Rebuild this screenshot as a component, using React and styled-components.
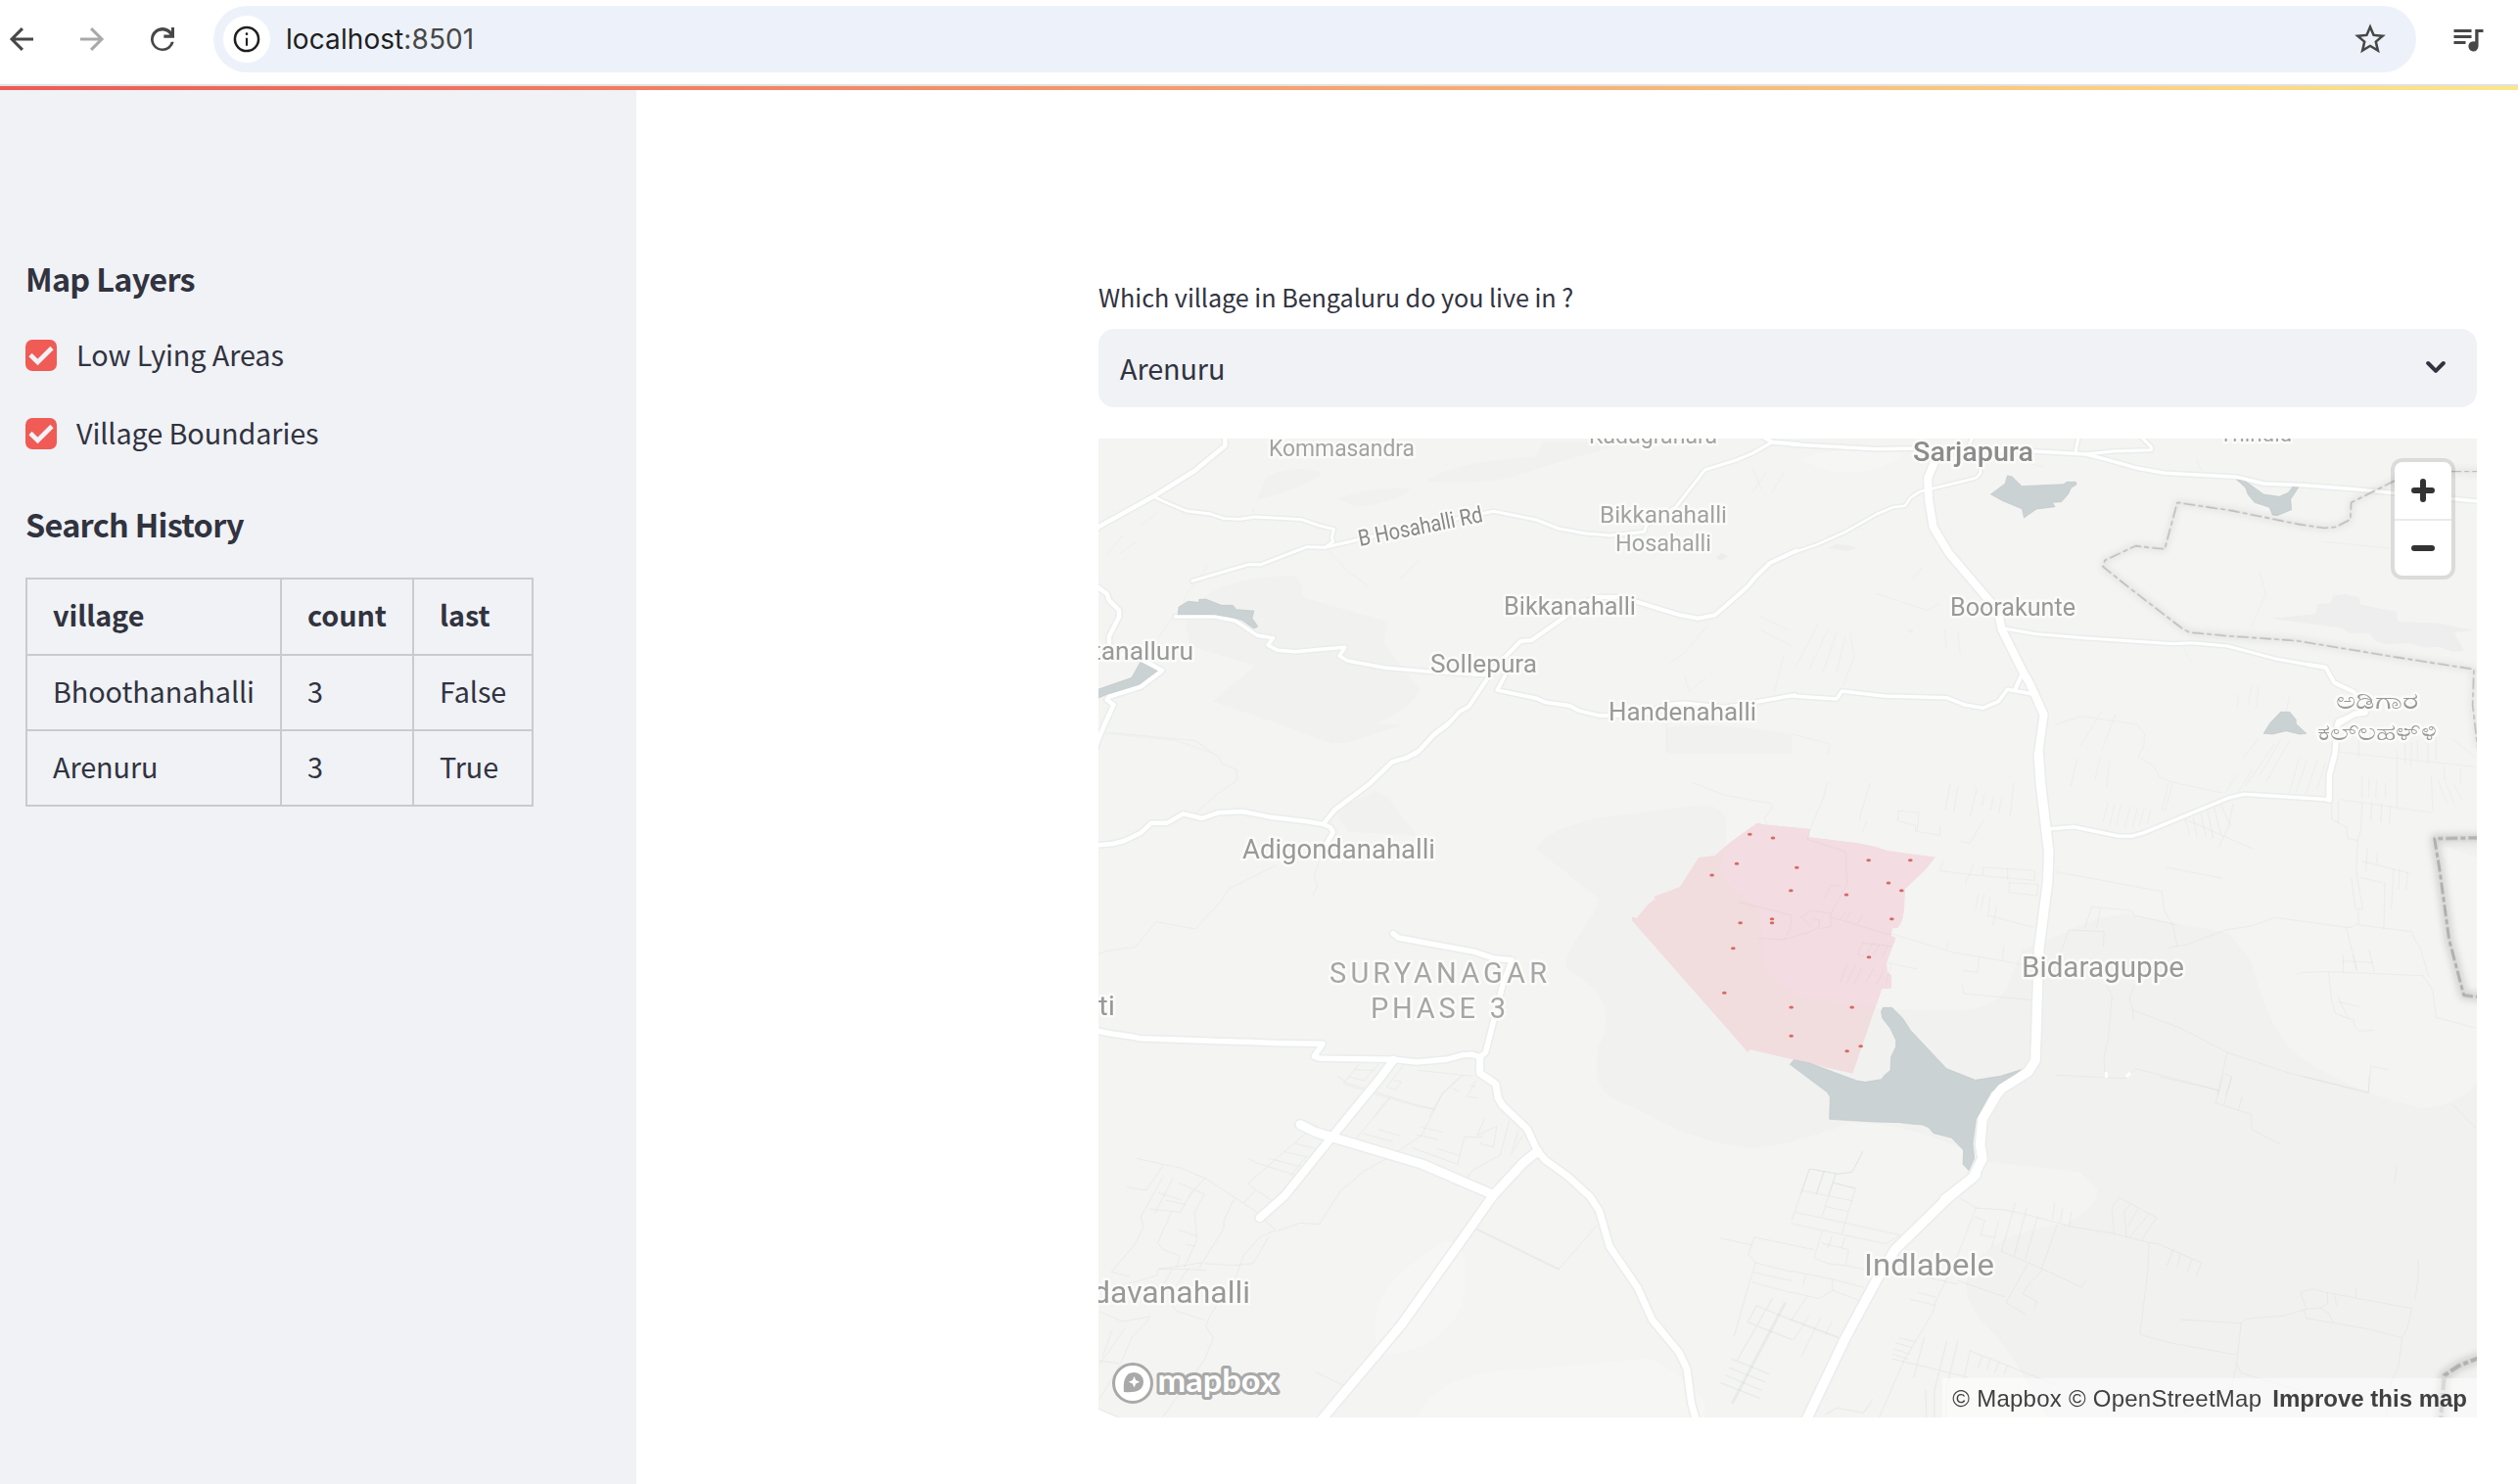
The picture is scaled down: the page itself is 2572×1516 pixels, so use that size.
import React from "react";
import styled, { createGlobalStyle } from "styled-components";

const GlobalStyle = createGlobalStyle`
  *, *::before, *::after { box-sizing: border-box; }
  body {
    margin: 0;
    background: #fff;
    color: #31333f;
    font-family: "Noto Sans CJK SC", "Noto Sans", sans-serif;
  }
`;

const Page = styled.div`
  display: flex;
  flex-direction: column;
  height: 1516px;
  overflow: hidden;
`;

/* ---------- browser toolbar ---------- */

const Toolbar = styled.header`
  display: flex;
  align-items: center;
  height: 88px;
  padding: 0 34px 6px 6px;
  border-bottom: 2px solid #dfe1e0;
  background: #fff;
`;

const NavButtons = styled.nav`
  display: flex;
  gap: 40px;
  margin-right: 36px;
`;

const Icon = styled.svg`
  display: block;
  flex: none;
  width: ${(p) => p.$size}px;
  height: ${(p) => p.$size}px;
  fill: ${(p) => p.$color || "#474747"};
`;

const AddressBar = styled.div`
  display: flex;
  align-items: center;
  flex: 1;
  height: 68px;
  padding: 0 28px 0 10px;
  border-radius: 34px;
  background: #edf2fa;
`;

const SiteInfo = styled.span`
  display: grid;
  place-items: center;
  width: 48px;
  height: 48px;
  margin-right: 16px;
  border-radius: 50%;
  background: #fff;
`;

const Url = styled.span`
  flex: 1;
  color: #1f1f1f;
  font: 400 28px/40px Inter, sans-serif;
  letter-spacing: 0.08px;
`;

const Port = styled.span`
  color: #474747;
`;

const MediaButton = styled.span`
  margin-left: 34px;
`;

/* ---------- app shell ---------- */

const Decoration = styled.div`
  flex: none;
  height: 4px;
  background: linear-gradient(90deg, #ee5a55, #fde68a);
`;

const Shell = styled.div`
  display: flex;
  flex: 1;
`;

const Sidebar = styled.aside`
  width: 650px;
  padding: 170px 26px 0;
  background: #f0f2f6;
`;

const SectionTitle = styled.h3`
  margin: ${(p) => p.$top || 0}px 0 0;
  font-size: 32.4px;
  font-weight: 700;
  line-height: 44px;
  letter-spacing: -0.7px;
`;

const CheckRow = styled.label`
  display: flex;
  gap: 20px;
  height: 32px;
  margin-top: ${(p) => p.$top}px;
  font-size: 28.8px;
  line-height: 30px;
  letter-spacing: -0.1px;
`;

const CheckBox = styled.span`
  display: grid;
  place-items: center;
  width: 32px;
  height: 32px;
  border-radius: 7px;
  background: #f05b55;
`;

const HistoryTable = styled.table`
  width: 518px;
  margin-top: 33px;
  border-collapse: collapse;
  table-layout: fixed;
  font-size: 28.8px;
  line-height: 40px;
`;

const Cell = styled.td`
  height: 77px;
  padding: 0 0 3px 26px;
  border: 2px solid #c9cbcf;
  text-align: left;
  font-weight: 400;
  letter-spacing: -0.08px;
`;

const HeadCell = styled(Cell)`
  height: 78px;
  padding-bottom: 5px;
  font-weight: 700;
`;

const Main = styled.main`
  display: flex;
  flex-direction: column;
  width: 1408px;
  margin-left: 472px;
  padding-top: 195px;
`;

const FieldLabel = styled.div`
  font-size: 25.2px;
  line-height: 32px;
  letter-spacing: -0.05px;
`;

const Select = styled.div`
  display: flex;
  align-items: center;
  justify-content: space-between;
  height: 80px;
  margin: 17px 0 32px;
  padding: 0 32px 2px 22px;
  border-radius: 16px;
  background: #f0f2f6;
  font-size: 28.8px;
  letter-spacing: -0.1px;
`;

/* ---------- map ---------- */

const MapFrame = styled.section`
  position: relative;
  height: 1000px;
  overflow: hidden;
  background: #f4f4f2;
`;

const MapCanvas = styled.svg`
  display: block;
  width: 1408px;
  height: 1000px;
`;

const Place = styled.text`
  font-family: Roboto, sans-serif;
  font-size: ${(p) => p.$size}px;
  font-weight: ${(p) => p.$weight || 400};
  fill: ${(p) => p.$color || "#999"};
  stroke: #fbfbfa;
  stroke-width: 5px;
  stroke-linejoin: round;
  paint-order: stroke;
`;

const Wordmark = styled.text`
  font: 700 33px Lato, sans-serif;
  fill: #fff;
  stroke: #a9a9a9;
  stroke-width: 6px;
  stroke-linejoin: round;
  paint-order: stroke;
`;

const ZoomGroup = styled.div`
  position: absolute;
  top: 24px;
  right: 26px;
  display: flex;
  flex-direction: column;
  width: 58px;
  border-radius: 8px;
  background: #fff;
  box-shadow: 0 0 0 4px rgba(0, 0, 0, 0.1);
`;

const ZoomButton = styled.button`
  display: grid;
  place-items: center;
  height: 58px;
  padding: 0;
  border: 0;
  border-top: ${(p) => (p.$divided ? "2px solid #ebebeb" : "0")};
  background: none;
`;

const Attribution = styled.div`
  position: absolute;
  right: 0;
  bottom: 0;
  display: flex;
  gap: 11px;
  height: 40px;
  padding: 1px 10px 0;
  background: rgba(255, 255, 255, 0.5);
  color: #404040;
  font: 400 24px/40px "Liberation Sans", Arial, sans-serif;
`;

const Credits = styled.span`
  letter-spacing: 0.24px;
`;

const k = 720 / 1568;
const t = 1 / 3;

const SHEETS = {
  nw: `translate(1110 270) scale(${k} ${t})`,
  ne: `translate(1830 270) scale(${k} ${t})`,
  west: `translate(1110 740) scale(${600 / 1568} ${t})`,
  mid: `translate(1630 800) scale(${t})`,
  east: `translate(2100 700) scale(${t})`,
  sw: `translate(1110 1100) scale(${k} ${t})`,
  se: `translate(1830 1100) scale(${k} ${t})`,
};

const ROADS = [
  ["nw", 4.5, "308,520 308,556 240,633 148,712 26,805 10,818"],
  ["nw", 2.8, "148,712 185,735 222,756 275,765 305,779 340,781 375,774 478,782 515,800 550,812 545,838 548,850 530,868"],
  ["nw", 3, "235,970 360,920 388,920 490,866 530,868 600,845 750,800 905,757 1000,783 1050,810 1110,825 1165,831 1240,820 1245,800 1310,745 1375,630 1445,600 1480,580 1525,545"],
  ["nw", 4, "1500,525 1525,545 1585,552"],
  ["nw", 4.5, "15,980 45,1010 50,1030 72,1060 72,1080 50,1140 50,1170 65,1190 120,1210 168,1245 120,1295 50,1325 45,1335 60,1350 40,1410 26,1455 10,1530"],
  ["nw", 3.5, "197,1080 285,1080 330,1092 380,1138 415,1145 403,1167 425,1183 465,1187 520,1180 575,1174 562,1200 580,1215 665,1237 760,1248 870,1258 893,1256"],
  ["nw", 4, "1580,877 1520,915 1490,955 1470,988 1398,1075 1360,1085 1320,1075 1225,1035 1180,1020 1130,1020 1080,1065 990,1152 965,1155 915,1225 895,1262 850,1355 830,1370 800,1415 770,1445 740,1490 730,1502"],
  ["nw", 3.8, "935,1250 913,1305 1000,1330 1020,1342 1075,1353 1095,1368 1140,1383 1230,1383 1290,1350 1330,1345 1420,1358 1495,1340 1575,1320"],
  ["ne", 3.5, "0,552 190,566 280,564 540,573 655,582 700,598 770,625 830,640 990,652 1050,672 1140,677 1260,690 1540,728"],
  ["ne", 3, "632,577 635,550 640,520"],
  ["ne", 3, "655,582 715,573 800,569 800,560 775,525"],
  ["ne", 3, "395,555 405,520"],
  ["ne", 2.5, "420,625 420,640 410,655 380,665 285,697 265,715 252,740 225,745 190,765 120,820 55,860 0,885"],
  ["ne", 8, "320,600 303,655 305,720 315,805 350,885 433,1020 458,1060 468,1120 515,1250 530,1285 561,1380 549,1500"],
  ["ne", 3, "468,1115 545,1133 650,1145 850,1163 890,1160 970,1170 1080,1210 1150,1227"],
  ["ne", 4, "1150,1227 1188,1235 1207,1282 1250,1310 1275,1345 1278,1375 1250,1380 1215,1400 1212,1440"],
  ["ne", 3.5, "-5,1322 100,1332 112,1308 205,1323 345,1328 385,1350 425,1360 460,1340 480,1303 540,1318"],
  ["ne", 4, "513,1255 497,1303"],
  ["west", 4.5, "10,372 70,366 100,357 145,332 173,302 215,302 258,274 308,288 350,271 415,267 490,284 590,298 630,306 650,315 658,330 635,375"],
  ["west", 4.5, "967,-4 930,28 888,80 855,102 815,115 755,182 662,262 632,305"],
  ["west", 5.5, "818,641 832,654 1035,697 1085,717 1135,722 1110,800 1065,1005 1050,1020"],
  ["west", 5.5, "10,935 65,948 120,957 140,962 520,977 630,979 607,1018 625,1024 820,1027 880,1035 960,1027 1005,1013 1030,1012 1050,1020"],
  ["sw", 7, "875,-60 874,-12 910,22 915,65 925,88 980,160 1003,228 1020,255 1070,305 1120,368 1140,410 1163,520 1225,645 1258,745 1318,845 1335,895 1345,1000 1357,1060"],
  ["sw", 8, "683,-52 655,0 545,185 440,365 385,432"],
  ["sw", 9, "475,146 510,170 545,185 745,267 905,362"],
  ["sw", 9, "1003,228 970,265 905,362 860,450 700,760 520,1055"],
  ["sw", 8, "-10,1014 17,1028 90,1070"],
  ["mid", 9.5, "1357,-90 1363,0 1388,210 1385,300 1358,510 1347,850 1325,885 1245,935 1228,955 1185,1030 1178,1110 1185,1150 1155,1210 1070,1275"],
  ["se", 9.5, "410,300 345,375 230,530 190,620 120,800 30,1060"],
  ["east", 3.5, "-20,440 55,434 190,462 230,463 270,452 530,345 575,334 838,350"],
  ["east", 5.5, "837,351 838,275 855,210 862,120 915,88 945,85"],
];

const LANES = [
  ["sw", 1, "110,250 210,280 265,312 330,370 375,412 420,470 385,492 350,545 330,620 275,730 265,765 282,800 262,868 168,1044"],
  ["sw", 1, "170,272 132,348 90,338 M168,310 120,430 127,458 108,512 55,598 95,612 M192,310 152,418 M160,355 210,378 M175,378 220,392 M140,405 208,415 235,350 M205,325 262,360 240,415 245,500 217,585 M262,312 225,370 M188,415 158,510 170,530 207,548 200,585 M328,375 305,440 305,465 250,585 M205,470 245,488 M220,515 240,518"],
  ["sw", 1, "488,172 358,328 410,378 M360,250 380,265 460,300 M440,230 490,245 M465,205 508,220 M405,250 475,275 M375,350 350,385 M488,245 455,300"],
  ["sw", 1, "425,472 475,448 517,452 565,350 618,288 668,250 M672,65 600,190 M560,0 580,20 640,45 730,85 770,98 M830,0 790,55 745,180 690,230 M615,175 680,198 M650,162 695,180 M745,155 792,170 M735,178 782,192 M725,218 825,268 840,185 880,185 M885,130 868,180 912,152 905,215 875,205 M780,220 830,242 M940,135 920,240 860,285 845,310 M960,165 945,235 M970,180 950,225"],
  ["sw", 1.8, "865,465 1050,590"],
  ["sw", 1, "1050,590 1135,455 M510,905 570,945 M262,572 330,578 370,572 405,490 M255,570 160,590 155,610 50,650 M85,770 30,880 M55,780 35,860 M140,740 100,800 75,880 30,985 M190,700 200,718 260,745 M30,720 80,750 140,735 M160,588 265,592 M190,590 165,650 M225,590 200,640 M26,870 70,878"],
  ["sw", 1, "1410,495 1480,515 M1568,515 1485,492 1472,545 1488,570 1568,598 M1488,570 1470,650 1440,795 M1485,600 1568,625 M1482,630 1568,662"],
  ["sw", 3, "1553,695 1437,998"],
  ["sw", 1.2, "1490,702 1470,752 1568,805 M1490,702 1568,745 M1525,680 1447,868 M1435,865 1517,910 M1430,892 1508,935 M1422,915 1500,960 M1410,938 1497,985"],
  ["se", 1, "158,230 135,292 105,298 40,282 0,440 M40,282 M72,290 55,358 M98,300 67,430 M92,325 142,342 112,480 M22,348 135,380 M75,398 125,412 M8,415 242,485 210,512 0,450 M68,475 50,555 80,572 125,580 160,590 M68,510 127,530 120,578 M90,490 80,525 M118,495 112,522"],
  ["se", 1, "0,515 50,530 M0,595 90,620 92,655 60,680 0,660 M90,620 160,645 M32,605 25,640 M92,655 150,685 M35,672 0,745 M65,738 22,855 M90,750 75,790 M38,735 5,805"],
  ["se", 1.8, "0,745 105,800"],
  ["se", 1, "375,372 410,402 475,408 530,425 625,460 715,480 795,508 815,512 912,570 900,610 M848,532 835,578 M865,545 858,585 M890,560 880,598 M410,402 370,545 345,620 320,690 315,720 250,870 195,1044 M370,625 475,675 M250,600 370,635 M408,430 430,440 420,485 450,492 M497,388 467,535 M523,402 495,550 M547,430 520,560 M590,455 570,535 555,590 M585,388 580,435 M603,402 598,445 M622,415 618,458 M467,535 560,590 645,645 657,622 M560,590 525,640 515,665 547,690 540,708 M525,575 477,692 520,728 M460,445 445,525 M282,662 320,675 M265,682 318,700"],
  ["se", 0.9, "795,508 792,600 775,790 840,815 990,852 M717,480 712,400 728,370 812,432 778,502 M745,490 740,410 755,390 M770,405 748,460 M795,420 752,492 M865,744 1000,755 1010,742 1095,732 1145,712 1132,660 1160,650 1192,662 1192,695 1175,708 1145,712 M1192,662 1380,710 1370,770 1358,800 1350,890 1335,930 1322,1044 M1145,740 1290,775 1358,800 M1140,715 1145,740 M1175,708 1195,725 1205,755 M1000,755 990,880 980,950 870,1030 M990,880 1000,908 1150,970 M1394,560 1394,615 1387,682 M1255,650 1255,678 M1207,665 1212,700 M1346,275 1341,325 M943,80 1022,115 1024,162 1088,207 M960,0 943,80 M978,0 962,85 M1002,62 994,100 M820,0 950,42 M1140,0 1283,50 1285,0 M1470,85 1524,160"],
  ["se", 1.1, "225,865 390,920 M295,800 272,920 M345,810 318,960 M370,810 345,950 M232,815 268,830 M228,835 262,850 M225,850 258,865 M240,800 275,812 M397,840 590,945 M397,840 385,915 M425,855 415,890 M443,862 435,895 M462,872 452,905 M480,885 473,910 M298,960 300,1044 M318,960 318,1044 M345,950 343,1044 M75,1035 100,1015 160,1030 180,990"],
  ["west", 0.8, "60,25 290,50 352,100 362,122 400,138 400,172 350,212 292,270 M505,432 378,505 360,540 290,627 185,605 130,682 50,695 32,705 M620,420 607,468 616,495 604,522"],
  ["west", 0.9, "728,1040 685,1102 880,1170 930,1180 M780,1040 740,1092 M715,1058 765,1060 M700,1080 740,1092 M845,1045 800,1112 825,1120 840,1095 820,1090 M885,1060 1030,1078 M1005,1075 950,1130 915,1200 M1040,1090 1015,1140 1045,1145 M1020,1105 1035,1110 M975,1115 995,1125 M810,1145 770,1200"],
  ["mid", 0.8, "708,0 698,45 663,125 648,172 765,210 770,310 720,400 M300,0 400,38 535,62 542,75 517,108 525,125 M840,0 808,110 M830,118 818,150 M928,85 925,115 980,130 980,148 1055,160 1055,132 M928,85 990,90 985,148 M1190,112 1145,185 1115,178 M1085,5 1072,80 M1110,10 1098,85 M1168,15 1148,100 M1190,38 1185,68 M1220,40 1210,80 M1280,0 1270,100 M1245,45 1235,90"],
  ["mid", 0.8, "1065,235 1055,268 1140,280 1345,298 1345,268 1187,258 1187,278 M1158,250 1132,308 M1262,262 1262,298 M1268,305 1265,335 1352,345 1355,310 1268,305 M900,460 1100,520 1175,532 1170,580 1125,575 M1175,532 1300,555 M1078,490 1075,510 M1250,500 1247,545 M1172,340 1165,385 M1190,342 1180,385 M1208,350 1202,410 M1228,380 1217,435 M1202,405 1340,442 M1122,615 1127,645 1340,665"],
  ["mid", 0.8, "440,365 600,405 595,450 575,480 500,475 M575,480 660,455 685,440 685,420 665,415 M630,410 660,390 720,400 720,440 690,445 M630,410 660,440 M720,410 900,465 M750,315 720,312 702,352 M765,395 750,418 M782,395 765,420 M820,400 802,432 M818,490 802,525 820,530 M850,490 830,520 M870,495 850,525 M895,500 878,530 M770,555 750,610 M795,560 770,612 M815,565 792,615 M850,570 828,610 M880,575 862,615 M905,555 890,612 M893,550 985,570 M818,490 905,500"],
  ["mid", 1, "818,1130 785,1192 740,1198 655,1182 628,1258 M700,1190 677,1258 M735,1198 715,1258 M730,1225 795,1242"],
  ["east", 0.9, "845,355 845,410 862,420 890,435 895,470 925,475 920,570 940,685 918,685 905,590 M865,355 865,420 M938,360 935,440 925,475 M968,360 965,415 M998,365 995,420 M1025,370 1022,425 M925,690 928,730 905,742 890,742 M670,712 890,742 922,877 M670,712 600,738 520,750 400,795 345,805 M928,735 1090,755 1100,780 1115,800 1142,892 M740,885 760,880 835,878 1125,890 1155,935 1165,1018 1285,1050 M835,880 845,965 855,1005 905,1025 M865,955 895,1020 M865,970 930,985 M910,1020 915,1045 930,1060 975,1057"],
  ["east", 0.9, "0,572 325,632 332,690 358,735 372,800 M340,558 510,592 M395,410 600,500 M395,410 410,455 M420,405 432,462 M445,395 460,465 M465,385 482,470 M485,375 505,455 M505,365 535,430 M543,365 530,430 500,495 M955,500 950,570 M985,515 982,545 M1035,565 1028,685 M1053,565 1050,625 M1078,572 1073,628 M1008,605 1005,745 M935,590 1000,605 M940,540 1080,575 M880,828 880,878 M912,828 922,870 M960,812 975,878 M880,845 970,850"],
  ["east", 0.7, "0,120 80,95 250,120 272,150 270,185 252,220 300,248 318,282 360,298 510,330 M160,360 145,415 M180,362 165,430 M200,365 185,430 M228,372 210,435 M250,375 235,435 M270,380 255,430 M290,385 280,425 M358,298 335,385 M345,300 325,380 M65,225 45,310 M165,235 155,310 M135,225 120,290 M690,165 625,275 M715,170 645,295 M745,225 715,330 M770,228 735,330 M800,232 765,335 M825,240 800,320 M670,180 580,310 M600,260 560,325 M555,275 520,330 M620,165 575,220 M560,30 555,70 M600,0 590,60 M620,5 615,70 M715,35 705,85"],
  ["east", 0.7, "868,205 1285,250 M1045,200 1045,380 M928,165 928,220 M938,280 938,345 M960,285 958,340 M983,290 980,345 M1010,300 1010,345 M870,350 1150,390 M1150,280 1155,385 M1170,290 1200,365 M1195,300 1220,360 M1220,305 1245,355 M1070,180 1070,240 M1090,175 1088,250 M1108,170 1108,225 M1140,180 1140,240 M1165,160 1165,230 M1215,165 1285,220 M1190,250 1190,290 M1240,260 1240,300"],
  ["east", 0.9, "155,920 172,955 160,1085 147,1140 150,1185 M240,920 225,960 235,995 380,1050 525,1125 720,1190 960,1248 M235,995 238,1025 M525,1125 495,1255 M515,1190 540,1200 522,1255 M0,1195 215,1205 245,1175 495,1240 M965,1168 958,1245 M965,1168 1020,1178 M0,860 40,750 148,755 145,800 M110,680 88,745 M137,685 125,742 M110,680 230,690 240,705 370,735"],
  ["ne", 0.6, "10,1230 60,1100 M40,1240 80,1120 M70,1250 100,1130 M100,1250 120,1140 M130,1130 140,1200 115,1290 M190,1010 300,1060 330,1040 M340,1120 345,1180 M370,1130 375,1190 M270,960 290,930 M1040,940 1055,1010 1020,1120 M870,1170 890,1220 M690,1370 640,1480 M720,1380 690,1490 M0,1440 85,1470 80,1500 M1180,850 1330,870 M900,600 920,650 M500,600 560,620"],
  ["nw", 0.6, "270,925 220,1015 215,1040 150,1160 M370,745 372,768 M740,905 700,960 M540,880 580,940 625,985 M1480,620 1500,690 M1510,640 1480,700 M1550,640 1525,700 M1380,1110 1330,1190 1300,1220 M1330,1260 1340,1310 1375,1270 M1290,1400 1290,1490 M80,830 45,890 M110,850 70,890 M160,760 120,800 M1500,1080 1560,1120 M1500,1120 1568,1170 M26,1435 200,1460 280,1498 M1530,1310 1550,1200"],
];

const WATER = [
  ["nw", "203,1075 205,1050 225,1033 250,1036 250,1027 265,1026 300,1045 325,1045 333,1058 372,1062 368,1085 381,1110 372,1116 345,1090 315,1080 270,1074"],
  ["nw", "120,1217 160,1245 115,1292 45,1318 20,1333 20,1305 100,1267"],
  ["ne", "443,705 475,672 480,648 490,650 512,680 605,674 612,667 632,667 634,675 622,685 615,705 600,728 580,730 586,743 545,750 517,777 513,750 470,725"],
  ["ne", "990,660 1005,660 1050,705 1085,712 1105,700 1115,681 1128,683 1110,720 1112,752 1080,770 1070,768 1063,745 1030,730 1015,705 1010,685"],
  ["ne", "1050,1438 1065,1405 1088,1372 1108,1372 1122,1395 1122,1408 1145,1438 1130,1440 1100,1430 1070,1440"],
  ["mid", "595,862 607,848 655,858 800,912 825,916 875,908 885,895 903,880 905,838 920,808 920,788 903,752 878,720 875,700 880,688 908,688 940,720 965,758 1075,875 1163,910 1240,898 1303,878 1240,930 1212,945 1165,1030 1155,1105 1160,1150 1143,1187 1125,1168 1127,1125 1090,1087 1035,1073 1020,1055 1000,1047 970,1045 930,1040 850,1038 716,1030 718,962 710,948"],
];

const BOUNDARIES = [
  ["ne", 1.3, "1540,634 1470,634 1400,636 1343,662 1245,730 1243,782 1210,805 1185,808 1130,797 980,755 858,730 830,873 765,863 697,907 693,927 750,990 868,1115 885,1128 980,1140 1120,1153 1250,1182 1350,1205 1518,1241 1515,1350 1526,1480"],
  ["east", 3, "1300,468 1160,470 1175,560 1205,780 1250,950 1300,956"],
  ["se", 4, "1535,858 1485,885 1452,915 1444,1050"],
];

const VILLAGE =
  "M495,122 512,127 656,141 652,166 800,184 855,195 895,208 1040,227 1010,265 947,325 945,385 940,415 935,428 925,443 908,445 905,468 919,474 891,550 893,580 905,588 906,628 876,631 787,890 472,816 466,825 455,812 110,420 112,410 125,414 160,372 182,355 178,348 258,318 315,228 365,222 415,180Z";

const LOW_POINTS = [
  [472, 157], [543, 168], [432, 247], [356, 282], [616, 259], [598, 329], [768, 342],
  [836, 236], [964, 236], [897, 306], [937, 329], [907, 416], [540, 416], [540, 428],
  [443, 428], [421, 506], [837, 533], [394, 643], [599, 687], [785, 687], [599, 775],
  [812, 806], [770, 821],
];

const PLACES = [
  { x: 1296, y: 466, w: 149, size: 23, name: "Kommasandra", color: "#a3a3a3" },
  { x: 1623, y: 453, w: 131, size: 23, name: "Kadagrahara", color: "#a3a3a3" },
  { x: 1634, y: 534, w: 130, size: 24, name: "Bikkanahalli", color: "#a3a3a3" },
  { x: 1650, y: 563, w: 98, size: 24, name: "Hosahalli", color: "#a3a3a3" },
  { x: 1536, y: 628, w: 135, size: 25, name: "Bikkanahalli" },
  { x: 1116, y: 674, w: 103, size: 25, name: "tanalluru" },
  { x: 1461, y: 687, w: 109, size: 25, name: "Sollepura" },
  { x: 1643, y: 736, w: 151, size: 26, name: "Handenahalli" },
  { x: 1954, y: 471, w: 123, size: 28, name: "Sarjapura", color: "#8c8c8c", weight: 500 },
  { x: 2267, y: 451, w: 74, size: 23, name: "Thindlu", color: "#a3a3a3" },
  { x: 1992, y: 629, w: 128, size: 25, name: "Boorakunte" },
  { x: 2386, y: 724, w: 84, size: 25, name: "ಅಡಿಗಾರ" },
  { x: 2367, y: 756, w: 122, size: 25, name: "ಕಲ್\u200cಲಹಳ್\u200cಳಿ" },
  { x: 1269, y: 877, w: 197, size: 28, name: "Adigondanahalli" },
  { x: 1358, y: 1004, w: 222, size: 29, name: "SURYANAGAR", color: "#a6a6a6", spaced: true },
  { x: 1400, y: 1040, w: 138, size: 29, name: "PHASE 3", color: "#a6a6a6", spaced: true },
  { x: 1122, y: 1037, w: 17, size: 28, name: "ti" },
  { x: 2065, y: 998, w: 166, size: 29, name: "Bidaraguppe" },
  { x: 1904, y: 1303, w: 133, size: 32, name: "Indlabele" },
  { x: 1116, y: 1331, w: 161, size: 31, name: "davanahalli" },
];

function Lines({ items, color, extra = 0, ...rest }) {
  return items.map(([sheet, width, points], i) => (
    <path
      key={i}
      d={"M" + points}
      transform={SHEETS[sheet]}
      vectorEffect="non-scaling-stroke"
      fill="none"
      stroke={color}
      strokeWidth={width + extra}
      strokeLinecap="round"
      strokeLinejoin="round"
      {...rest}
    />
  ));
}

function VillageMap() {
  return (
    <MapCanvas viewBox="1122 448 1408 1000">
      <defs>
        <filter id="glow" x="-20%" y="-20%" width="140%" height="140%">
          <feGaussianBlur stdDeviation="3.5" />
        </filter>
        <clipPath id="village">
          <path d={VILLAGE} />
        </clipPath>
      </defs>

      <g fill="#f1f1f0">
        <path d="M1569,867 Q1575,850 1630,836 L1740,822 Q1763,825 1763,840 V880 Q1758,900 1797,930 C1803,950 1796,990 1830,1017 Q1860,1032 2000,1032 Q2047,1030 2053,1000 L2066,970 2110,953 Q2140,935 2175,934 L2277,953 2300,983 Q2320,1060 2350,1080 Q2400,1115 2474,1132 2510,1130 2530,1106 V1448 H2090 Q2060,1385 2025,1350 2000,1320 2012,1300 2030,1260 2110,1250 2145,1230 2142,1215 L2124,1197 2030,1187 Q1960,1147 1890,1147 1830,1170 1790,1173 C1720,1165 1690,1140 1665,1130 1630,1118 1628,1100 1632,1070 1650,1040 1640,1010 1600,990 1595,970 1630,940 1633,918 1580,890 1569,867Z" />
        <path transform={SHEETS.nw} d="M220,1110 Q240,960 460,955 480,960 480,1020 L670,1095 660,1160 740,1300 Q740,1360 545,1470 L410,1400 280,1340 375,1230 230,1170Z" />
        <path transform={SHEETS.nw} d="M755,665 Q810,605 1000,590 L1015,545 1200,548 Q1060,600 950,650 870,680 755,665ZM560,720 Q620,680 720,688 700,725 600,745ZM378,722 400,650 Q460,610 525,640 480,690 378,722ZM1290,1420 Q1400,1400 1568,1440 V1500 H1290Z" />
        <path transform={SHEETS.west} d="M560,0 Q650,70 700,55 L850,0ZM770,205 800,220 880,340 700,330 660,262Z" />
        <path transform={SHEETS.east} d="M1180,490 H1295 V530Z" />
      </g>
      <g fill="#f6f6f5">
        <path transform={SHEETS.sw} d="M735,1044 Q770,900 1000,895 L1250,862 Q1340,920 1375,1000 V1044ZM800,505 Q865,520 835,700 780,850 650,850 600,650 800,505Z" />
        <path transform={SHEETS.ne} d="M20,600 Q110,550 260,570 200,650 90,635Z" />
      </g>
      <path
        transform={SHEETS.ne}
        fill="#eeeeee"
        d="M1065,1085 1165,1072 1170,1042 1200,1038 1205,1015 1230,1010 1262,1020 1265,1042 1345,1065 1350,1095 1440,1100 1518,1122 1475,1128 1495,1185 1470,1187 1440,1172 1410,1175 1375,1162 1320,1165 1300,1155 1285,1130 1240,1130 1225,1115ZM80,870 100,858 130,862 147,870 125,878ZM255,1122 270,1120 268,1130Z"
      />
      <path transform={SHEETS.nw} fill="#ececec" d="M1400,900 1412,885 1427,895 1412,908Z" />

      <g transform={SHEETS.mid}>
        <path d={VILLAGE} fill="#f1dcde" />
        <path
          clipPath="url(#village)"
          fill="#f3dce2"
          d="M400,100 Q395,200 383,260 390,320 490,375 510,420 512,540 530,620 650,665 L880,690 1100,600 V100Z"
        />
      </g>

      <Lines items={LANES} color="#4a8080" strokeOpacity="0.075" />
      <Lines items={ROADS} color="#e9edec" extra={3} />
      {WATER.map(([sheet, points], i) => (
        <path
          key={i}
          d={"M" + points + "Z"}
          transform={SHEETS[sheet]}
          vectorEffect="non-scaling-stroke"
          fill="#cbd2d3"
          stroke="#bcc5c6"
          strokeWidth="0.6"
        />
      ))}
      <Lines items={ROADS} color="#ffffff" />
      <path d="M2151.5,1095v6M2172,1100l4,-4" stroke="#fff" strokeWidth="3" />

      <g transform={SHEETS.mid} fill="#d66a62">
        {LOW_POINTS.map(([cx, cy]) => (
          <ellipse key={cx + "-" + cy} cx={cx} cy={cy} rx="7" ry="4.6" />
        ))}
      </g>

      <g filter="url(#glow)">
        <Lines items={BOUNDARIES.slice(0, 1)} color="#000000" extra={3} strokeOpacity="0.08" />
        <Lines items={BOUNDARIES.slice(1)} color="#000000" extra={6} strokeOpacity="0.13" />
      </g>
      <Lines items={BOUNDARIES} color="#b0b1b1" strokeLinecap="butt" strokeDasharray="12 3 5 3" />

      {PLACES.map((p, i) => (
        <Place
          key={i}
          x={p.x}
          y={p.y}
          $size={p.size}
          $color={p.color}
          $weight={p.weight}
          textLength={p.w}
          lengthAdjust={p.spaced ? "spacing" : "spacingAndGlyphs"}
        >
          {p.name}
        </Place>
      ))}
      <Place
        $size={23}
        $color="#888"
        transform="translate(1389 558) rotate(-11.3)"
        textLength="129"
        lengthAdjust="spacingAndGlyphs"
      >
        B Hosahalli Rd
      </Place>

      <circle cx="1157" cy="1413" r="19.5" fill="#fff" stroke="#a9a9a9" strokeWidth="3" />
      <path
        d="M1148,1422 C1147,1411 1149,1402 1158.500,1402 A9.500,9.500 0 0 1 1168,1411.500 C1168,1421 1159,1423 1148,1422Z"
        fill="#a9a9a9"
      />
      <path d="M1158.500,1406 l1.700,4 4,1.700 -4,1.700 -1.700,4 -1.700,-4 -4,-1.700 4,-1.700Z" fill="#fff" />
      <Wordmark x="1182.500" y="1422" textLength="122" lengthAdjust="spacingAndGlyphs">
        mapbox
      </Wordmark>
    </MapCanvas>
  );
}

function Check({ label, top }) {
  return (
    <CheckRow $top={top}>
      <CheckBox>
        <svg width="26" height="26" viewBox="0 0 26 26">
          <path d="M2 12.500 9.500 20 24 5.500" fill="none" stroke="#f0f2f6" strokeWidth="4.600" />
        </svg>
      </CheckBox>
      {label}
    </CheckRow>
  );
}

const HISTORY = [
  ["Bhoothanahalli", "3", "False"],
  ["Arenuru", "3", "True"],
];

export default function App() {
  return (
    <Page>
      <GlobalStyle />
      <Toolbar>
        <NavButtons>
          <Icon $size={32} viewBox="0 0 32 32">
            <path d="M15.800 4 18 6.200 9.600 14.500H28v3H9.600L18 25.800 15.800 28 3.900 16Z" />
          </Icon>
          <Icon $size={32} $color="#a9a9a9" viewBox="0 0 32 32">
            <path d="M16.200 4 14 6.200 22.400 14.500H4v3h18.400L14 25.800 16.200 28 28.100 16Z" />
          </Icon>
          <Icon $size={32} viewBox="0 0 24 24">
            <path d="M12 21a9 9 0 1 1 6.700-15V3H21v8h-8V8.700h4.600A6.800 6.800 0 1 0 18.500 14h2.300A9 9 0 0 1 12 21Z" />
          </Icon>
        </NavButtons>
        <AddressBar>
          <SiteInfo>
            <Icon $size={32} $color="#1f1f1f" viewBox="0 0 24 24">
              <path d="M11.200 11h1.600v6h-1.600zM12 7a1 1 0 1 0 0 2 1 1 0 0 0 0-2Zm0-5a10 10 0 1 0 0 20 10 10 0 0 0 0-20Zm0 18.100A8.100 8.100 0 1 1 12 3.900a8.100 8.100 0 0 1 0 16.200Z" />
            </Icon>
          </SiteInfo>
          <Url>
            localhost<Port>:8501</Port>
          </Url>
          <Icon $size={38} viewBox="0 0 24 24">
            <path d="m22 9.240-7.190-.620L12 2 9.190 8.630 2 9.240l5.460 4.730L5.820 21 12 17.270 18.180 21l-1.630-7.030L22 9.240ZM12 15.400l-3.760 2.270 1-4.280-3.320-2.880 4.380-.380L12 6.100l1.710 4.040 4.380.380-3.320 2.880 1 4.280L12 15.400Z" />
          </Icon>
        </AddressBar>
        <MediaButton>
          <Icon $size={36} viewBox="0 0 24 24">
            <path d="M15 5.300H3v2h12v-2Zm0 4H3v2h12v-2ZM3 15.300h8v-2H3v2ZM17.500 5.300v8.400a3.400 3.400 0 1 0 2.200 3.200V7.300H23v-2h-5.500Z" />
          </Icon>
        </MediaButton>
      </Toolbar>
      <Decoration />
      <Shell>
        <Sidebar>
          <SectionTitle>Map Layers</SectionTitle>
          <Check label="Low Lying Areas" top={41} />
          <Check label="Village Boundaries" top={48} />
          <SectionTitle $top={54}>Search History</SectionTitle>
          <HistoryTable>
            <colgroup>
              <col width="260" />
              <col width="135" />
              <col width="122" />
            </colgroup>
            <thead>
              <tr>
                <HeadCell as="th">village</HeadCell>
                <HeadCell as="th">count</HeadCell>
                <HeadCell as="th">last</HeadCell>
              </tr>
            </thead>
            <tbody>
              {HISTORY.map((row) => (
                <tr key={row[0]}>
                  {row.map((value, i) => (
                    <Cell key={i}>{value}</Cell>
                  ))}
                </tr>
              ))}
            </tbody>
          </HistoryTable>
        </Sidebar>
        <Main>
          <FieldLabel>Which village in Bengaluru do you live in ?</FieldLabel>
          <Select>
            Arenuru
            <svg width="20" height="14" viewBox="0 0 20 14">
              <path
                d="M2.200 3 10 10.800 17.800 3"
                fill="none"
                stroke="#31333f"
                strokeWidth="4"
                strokeLinecap="round"
                strokeLinejoin="round"
              />
            </svg>
          </Select>
          <MapFrame>
            <VillageMap />
            <ZoomGroup>
              <ZoomButton>
                <svg width="24" height="24" viewBox="0 0 24 24">
                  <path d="M12 3V21M3 12H21" stroke="#333" strokeWidth="6" strokeLinecap="round" />
                </svg>
              </ZoomButton>
              <ZoomButton $divided>
                <svg width="24" height="24" viewBox="0 0 24 24">
                  <path d="M3 12H21" stroke="#333" strokeWidth="6" strokeLinecap="round" />
                </svg>
              </ZoomButton>
            </ZoomGroup>
            <Attribution>
              <Credits>© Mapbox © OpenStreetMap</Credits>
              <b>Improve this map</b>
            </Attribution>
          </MapFrame>
        </Main>
      </Shell>
    </Page>
  );
}
